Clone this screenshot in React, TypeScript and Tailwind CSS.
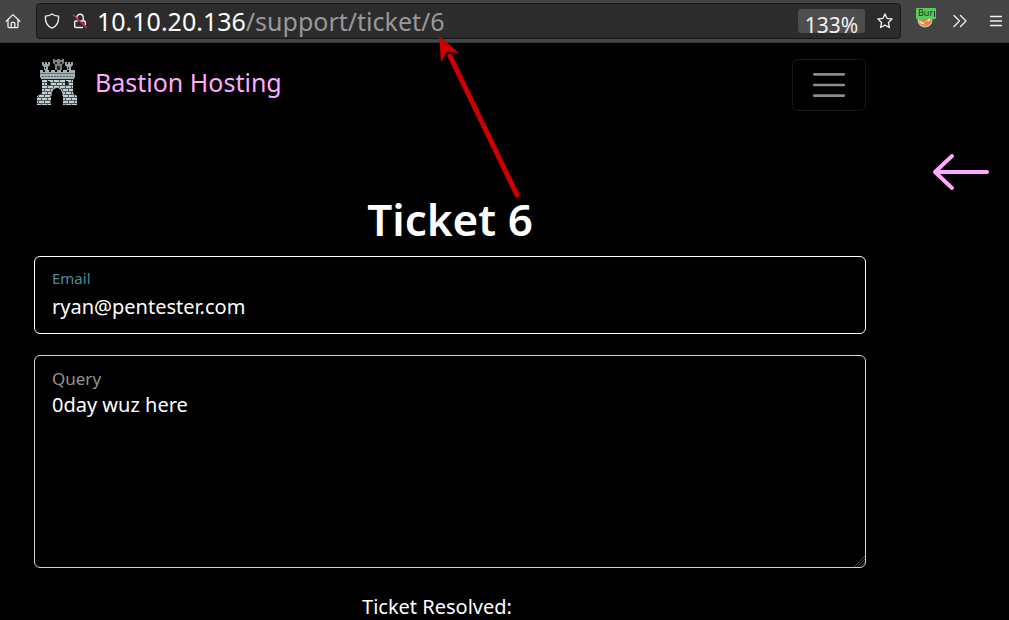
import { useState } from "react";

function HomeIcon() {
  return (
    <svg viewBox="0 0 16 16" className="h-4 w-4" fill="none" stroke="currentColor" strokeWidth="1.3" strokeLinecap="round" strokeLinejoin="round">
      <path d="M1.2 8.2 8 1.6l6.8 6.6" />
      <path d="M3 7v6.6c0 .6.4 1 1 1h8c.6 0 1-.4 1-1V7" />
      <path d="M6.2 14.4v-4c0-.6.4-1 1-1h1.6c.6 0 1 .4 1 1v4" />
    </svg>
  );
}

function ShieldIcon() {
  return (
    <svg viewBox="0 0 16 16" className="h-4 w-4" fill="none" stroke="currentColor" strokeWidth="1.3" strokeLinejoin="round">
      <path d="M8 .9c2 1.5 4.2 2 6.6 2.3.3 5-.9 9.7-6.6 11.9C2.3 12.9 1.1 8.2 1.4 3.2 3.8 2.9 6 2.4 8 .9z" />
    </svg>
  );
}

function InsecureLockIcon() {
  return (
    <svg viewBox="0 0 16 16" className="h-4 w-4" fill="none" strokeWidth="1.4">
      <path d="M4.8 5V4.4a3.2 3.2 0 0 1 6.4 0v3.1" stroke="currentColor" />
      <path d="M8 8h4.3c.6 0 1 .4 1 1v3M11 14.5H3.7c-.6 0-1-.4-1-1V9c0-.6.4-1 1-1h2" stroke="currentColor" />
      <path d="M1 1.5 14.8 14.8" stroke="#e22850" strokeWidth="1.5" />
    </svg>
  );
}

function StarIcon() {
  return (
    <svg viewBox="0 0 16 16" className="h-4 w-4" fill="none" stroke="currentColor" strokeWidth="1.3" strokeLinejoin="round">
      <path d="m8 .9 2.1 4.5 5 .6-3.7 3.5 1 5L8 12.1l-4.4 2.4 1-5L.9 6l5-.6z" />
    </svg>
  );
}

function BurpIcon() {
  return (
    <svg viewBox="0 0 20 22" className="h-[22px] w-5" fontFamily="'Noto Sans', sans-serif">
      <circle cx="9" cy="13" r="7.5" fill="#c9b9aa" />
      <circle cx="9" cy="12.5" r="6.5" fill="#e8833a" />
      <path d="m3 13 5 3 6-5 1 1-6 6-5-2z" fill="#f8dcb8" />
      <path d="M8 17.5l4-3" stroke="#bd4b20" fill="none" />
      <rect x="0" y="1" width="20" height="11" rx="1" fill="#5ec95e" />
      <text x="2" y="9" fontSize="9" fill="#16381a">Bur</text>
      <path d="M18.5 4v6" stroke="#16381a" />
    </svg>
  );
}

function CastleLogo() {
  return (
    <svg viewBox="0 0 40 46" className="h-[46px] w-10">
      <defs>
        <pattern id="bricks" width="6" height="6" patternUnits="userSpaceOnUse">
          <rect width="6" height="6" fill="#c3ced0" />
          <path d="M0 2h6v1H0zM0 5h6v1H0zM1 0h1v2H1zM4 3h1v2H4z" fill="#4b5557" />
        </pattern>
      </defs>
      <path d="M5 3h2v2h1V3h2v2h1V3h2v3l-2 2v3H7V8L5 6z" fill="#9da7a7" />
      <path d="M28 3h2v2h1V3h2v2h1V3h2v3l-2 2v3h-4V8l-2-2z" fill="#9da7a7" />
      <path d="M16 0h2v1h2V0h3v1h2V0h2v4l-2 2v5h-7V6l-2-2z" fill="#817d77" />
      <path d="M18 3h2v2h-2zM23 3h2v2h-2zM20 7h3v4h-3zM8 8h1v2H8zM31 8h1v2h-1z" fill="#202525" />
      <path d="M3 11h3v2h2v-2h4v2h2v-2h4v2h2v-2h4v2h2v-2h4v2h2v-2h6v7l-2 3H5l-2-3z" fill="#a5b2b4" />
      <path d="M3 14h35v1H3z" fill="#687375" />
      <path d="M5 17.500h31" stroke="#586264" strokeDasharray="2 1" />
      <path d="M5 20h31v14l4 3v9H26V34l-2-4-4-2-4 2-2 4v12H0v-9l5-3z" fill="url(#bricks)" />
      <path d="M5 20h31v1H5zM10 22h3v4h-3zM28 22h3v4h-3z" fill="#171b1c" />
      <path d="M14 37v-3l2-4 4-2 4 2 2 4v3" fill="none" stroke="#c3ced0" />
    </svg>
  );
}

function BrowserBar() {
  return (
    <header className="flex h-[43px] items-center border-b border-[#3a3a3a] bg-[#444444] pl-[5px] text-[#f0f0f0]">
      <button aria-label="Home">
        <HomeIcon />
      </button>
      <div className="ml-[15px] flex h-9 min-w-0 flex-1 items-center rounded border border-[#181818] bg-[#2c2c2c] px-[7px]">
        <button aria-label="Tracking protection">
          <ShieldIcon />
        </button>
        <button aria-label="Connection not secure" className="ml-3">
          <InsecureLockIcon />
        </button>
        <a href="#ticket" aria-label="Page address" className="ml-[9px] min-w-0 flex-1 truncate text-[25px] leading-9 text-[#989898]">
          <span className="text-white">10.10.20.136</span>/support/ticket/6
        </a>
        <button className="h-6 w-[67px] rounded-[3px] bg-[#4d4d4d] text-[21px] leading-8">133%</button>
        <button aria-label="Bookmark" className="ml-3">
          <StarIcon />
        </button>
      </div>
      <div className="flex items-center pr-[5px] pl-[15px]">
        <button aria-label="Burp proxy" className="-mt-1.5">
          <BurpIcon />
        </button>
        <button aria-label="More tools" className="ml-4">
          <svg viewBox="0 0 16 16" className="h-4 w-4" fill="none" stroke="currentColor" strokeWidth="1.3" strokeLinecap="round" strokeLinejoin="round">
            <path d="m2 2.500 5.500 5.500L2 13.500M8.500 2.500 14 8l-5.500 5.500" />
          </svg>
        </button>
        <button aria-label="Application menu" className="ml-5">
          <svg viewBox="0 0 16 16" className="h-4 w-4" stroke="currentColor" strokeWidth="1.3" strokeLinecap="round">
            <path d="M2.500 3.500h11M2.500 8h11M2.500 12.500h11" />
          </svg>
        </button>
      </div>
    </header>
  );
}

export default function App() {
  const [email, setEmail] = useState("ryan@pentester.com");
  const [query, setQuery] = useState("0day wuz here");

  return (
    <div className="relative min-h-screen bg-black font-['Noto_Sans',sans-serif] text-white">
      <BrowserBar />

      <div className="flex pl-[34px]">
        <main className="min-w-0 flex-1 pt-4">
          <nav className="flex items-start justify-between">
            <a href="#home" className="flex items-center gap-[18px] pl-[3px] text-[25px] leading-8 text-[#ffaaff]">
              <CastleLogo />
              Bastion Hosting
            </a>
            <button aria-label="Toggle navigation" className="flex h-[52px] w-[74px] items-center justify-center rounded-md border border-[#1a1a1a]">
              <svg viewBox="0 0 40 40" className="h-10 w-10" stroke="#8c8c8c" strokeWidth="2.7" strokeLinecap="round">
                <path d="M5.300 9.300h29.400M5.300 20h29.400M5.300 30.700h29.400" />
              </svg>
            </button>
          </nav>

          <form id="ticket" onSubmit={(event) => event.preventDefault()}>
            <h1 className="mt-[81px] text-center text-[44px] leading-[54px] font-semibold">Ticket 6</h1>

            <div className="mt-2.5 h-[78px] rounded-md border border-white px-[17px] pt-[11px]">
              <label htmlFor="email" className="block text-[15px] leading-5 text-[#4f899f]">Email</label>
              <input
                id="email"
                type="email"
                value={email}
                onChange={(event) => setEmail(event.target.value)}
                className="mt-px block w-full bg-transparent text-xl leading-9 outline-none"
              />
            </div>

            <div className="relative mt-[21px] h-[213px] rounded-md border border-[#d4d4d4] px-[17px] pt-[11px]">
              <label htmlFor="query" className="block text-[17px] leading-6 text-[#929292]">Query</label>
              <textarea
                id="query"
                value={query}
                onChange={(event) => setQuery(event.target.value)}
                className="block h-40 w-full resize-none bg-transparent text-xl leading-7 outline-none"
              />
              <svg viewBox="0 0 12 12" className="absolute right-0 bottom-0 h-3 w-3" stroke="#444444">
                <path d="M1 12 12 1M4 12l8-8M7 12l5-5" />
              </svg>
            </div>

            <p className="mt-[25px] pr-[26px] text-center text-xl leading-7">Ticket Resolved:</p>
          </form>
        </main>

        <aside className="w-[143px] pt-[107px] pl-[66px]">
          <a href="#back" aria-label="Back" className="block text-[#ffaaff]">
            <svg viewBox="0 0 60 44" className="h-11 w-[60px]" fill="none" stroke="currentColor" strokeWidth="4" strokeLinecap="round" strokeLinejoin="round">
              <path d="M55 22H3M20 6 3 22l17 16" />
            </svg>
          </a>
        </aside>
      </div>

      {/* annotation pointing at the ticket id */}
      <svg viewBox="0 0 90 170" className="pointer-events-none absolute top-8 left-[434px] h-[170px] w-[90px]">
        <path d="M83 163 16 24" stroke="#cc0000" strokeWidth="5" strokeLinecap="round" />
        <path d="M5 4 25 21 13 20 7 30z" fill="#cc0000" />
      </svg>
    </div>
  );
}
